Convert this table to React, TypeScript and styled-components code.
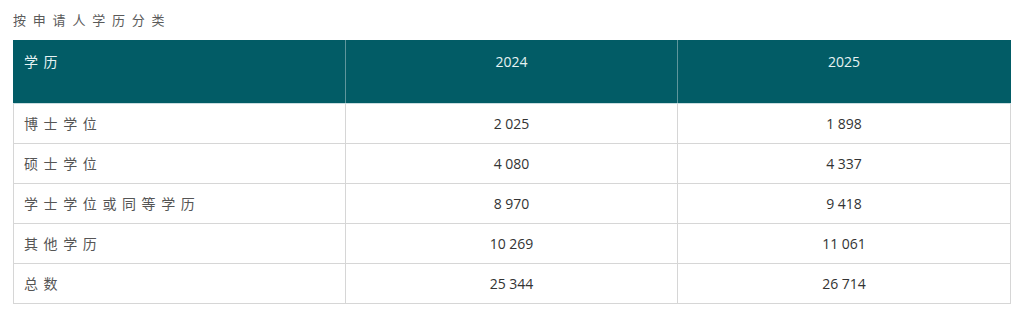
import { createGlobalStyle, styled } from "styled-components";

const GlobalStyle = createGlobalStyle`
  html, body {
    margin: 0;
    padding: 0;
    background: #ffffff;
  }
`;

interface Row {
  label: string;
  y2024: string;
  y2025: string;
}

const rows: Row[] = [
  { label: "博士学位", y2024: "2\u2005025", y2025: "1\u2005898" },
  { label: "硕士学位", y2024: "4\u2005080", y2025: "4\u2005337" },
  { label: "学士学位或同等学历", y2024: "8\u2005970", y2025: "9\u2005418" },
  { label: "其他学历", y2024: "10\u2005269", y2025: "11\u2005061" },
  { label: "总数", y2024: "25\u2005344", y2025: "26\u2005714" },
];

const App = () => {
  return (
    <>
      <GlobalStyle />
      <Wrapper>
        <Caption>按申请人学历分类</Caption>
        <Table>
          <colgroup>
            <col style={{ width: "332px" }} />
            <col style={{ width: "332px" }} />
            <col />
          </colgroup>
          <thead>
            <tr>
              <HeadCell $align="left">学历</HeadCell>
              <HeadCell $align="center">2024</HeadCell>
              <HeadCell $align="center">2025</HeadCell>
            </tr>
          </thead>
          <tbody>
            {rows.map((row) => (
              <tr key={row.label}>
                <LabelCell>{row.label}</LabelCell>
                <NumberCell>{row.y2024}</NumberCell>
                <NumberCell>{row.y2025}</NumberCell>
              </tr>
            ))}
          </tbody>
        </Table>
      </Wrapper>
    </>
  );
};

export default App;

const Wrapper = styled.div`
  padding: 11px 13px 0 13px;
  width: 998px;
  font-family: "Open Sans", "Noto Sans CJK SC", sans-serif;
`;

const Caption = styled.div`
  font-size: 13px;
  line-height: 18px;
  letter-spacing: 6.8px;
  color: #5a5a5a;
  margin-bottom: 11px;
`;

const Table = styled.table`
  width: 998px;
  border-collapse: collapse;
  table-layout: fixed;
`;

const HeadCell = styled.th<{ $align: "left" | "center" }>`
  height: 63px;
  box-sizing: border-box;
  padding: 11px 10px 0 10px;
  vertical-align: top;
  text-align: ${({ $align }) => $align};
  background-color: #025c66;
  color: #e6f3f3;
  font-size: 14px;
  font-weight: 400;
  line-height: 20px;
  letter-spacing: ${({ $align }) => ($align === "left" ? "5.6px" : "0")};
  border: 1px solid #5f969c;
  border-top-color: #025c66;
  border-bottom-color: #c9dde0;

  &:first-child {
    border-left-color: #025c66;
  }

  &:last-child {
    border-right-color: #025c66;
  }
`;

const BodyCell = styled.td`
  height: 40px;
  box-sizing: border-box;
  padding: 0 10px;
  border: 1px solid #d6d6d6;
  font-size: 14px;
  line-height: 20px;
  color: #333333;
`;

const LabelCell = styled(BodyCell)`
  text-align: left;
  letter-spacing: 5.6px;
  color: #555555;
`;

const NumberCell = styled(BodyCell)`
  text-align: center;
`;
